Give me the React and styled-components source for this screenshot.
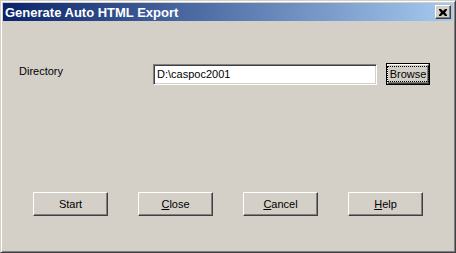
import React from "react";
import styled, { createGlobalStyle } from "styled-components";

const Global = createGlobalStyle`
  html, body { margin: 0; padding: 0; background: #d4d0c8; }
  body { font-family: "Liberation Sans", Arial, sans-serif; font-size: 11px; }
`;

const Window = styled.div`
  box-sizing: border-box;
  width: 456px;
  height: 253px;
  background: #d4d0c8;
  border: 1px solid;
  border-color: #d4d0c8 #404040 #404040 #d4d0c8;
  box-shadow: inset 1px 1px #ffffff, inset -1px -1px #808080;
  padding: 2px;
  display: flex;
  flex-direction: column;
`;

const TitleBar = styled.div`
  height: 18px;
  background: linear-gradient(to right, #0a246a, #a6caf0);
  display: flex;
  align-items: center;
  justify-content: space-between;
  padding: 0 2px 0 2px;
`;

const Title = styled.span`
  color: #ffffff;
  font-weight: bold;
  font-size: 13px;
  line-height: 15px;
`;

const CloseBox = styled.div`
  box-sizing: border-box;
  width: 16px;
  height: 14px;
  background: #d4d0c8;
  border: 1px solid;
  border-color: #ffffff #404040 #404040 #ffffff;
  box-shadow: inset -1px -1px #808080;
  display: flex;
  align-items: center;
  justify-content: center;
`;

const Client = styled.div`
  flex: 1;
  display: flex;
  flex-direction: column;
  padding: 42px 0 0 16px;
`;

const Row = styled.div`
  display: flex;
  align-items: flex-start;
  height: 22px;
`;

const Label = styled.span`
  width: 134px;
  color: #000;
  line-height: 13px;
  padding-top: 2px;
`;

const Input = styled.div`
  box-sizing: border-box;
  width: 224px;
  height: 21px;
  margin-top: 1px;
  background: #ffffff;
  border: 1px solid;
  border-color: #808080 #ffffff #ffffff #808080;
  box-shadow: inset 1px 1px #404040, inset -1px -1px #d4d0c8;
  padding: 3px 0 0 3px;
  color: #000;
  line-height: 13px;
`;

const Button = styled.button`
  box-sizing: border-box;
  width: ${(p) => p.w || 75}px;
  height: ${(p) => p.h || 24}px;
  margin: 0;
  padding: 0;
  background: #d4d0c8;
  font-family: "Liberation Sans", Arial, sans-serif;
  font-size: 11px;
  color: #000;
  border: 1px solid;
  border-color: #ffffff #404040 #404040 #ffffff;
  box-shadow: inset -1px -1px #808080;
  display: flex;
  align-items: center;
  justify-content: center;
  line-height: 13px;
`;

const DefaultFrame = styled.div`
  box-sizing: border-box;
  margin-left: 9px;
  width: 44px;
  height: 22px;
  border: 1px solid #000;
  display: flex;
`;

const Focus = styled.span`
  outline: 1px dotted #000;
  outline-offset: 1px;
  padding: 0 1px;
  line-height: 12px;
`;

const ButtonRow = styled.div`
  display: flex;
  gap: 30px;
  margin-top: 107px;
  padding-left: 14px;
`;

export default function App() {
  return (
    <>
      <Global />
      <Window>
        <TitleBar>
          <Title>Generate Auto HTML Export</Title>
          <CloseBox>
            <svg width="8" height="7" viewBox="0 0 8 7">
              <path d="M0 0h2l2 2 2-2h2v1L6 3.5 8 6v1H6L4 5 2 7H0V6l2-2.5L0 1z" fill="#000" />
            </svg>
          </CloseBox>
        </TitleBar>
        <Client>
          <Row>
            <Label>Directory</Label>
            <Input>D:\caspoc2001</Input>
            <DefaultFrame>
              <Button w={42} h={20}>
                <Focus>Browse</Focus>
              </Button>
            </DefaultFrame>
          </Row>
          <ButtonRow>
            <Button>Start</Button>
            <Button><span><u>C</u>lose</span></Button>
            <Button><span><u>C</u>ancel</span></Button>
            <Button><span><u>H</u>elp</span></Button>
          </ButtonRow>
        </Client>
      </Window>
    </>
  );
}
